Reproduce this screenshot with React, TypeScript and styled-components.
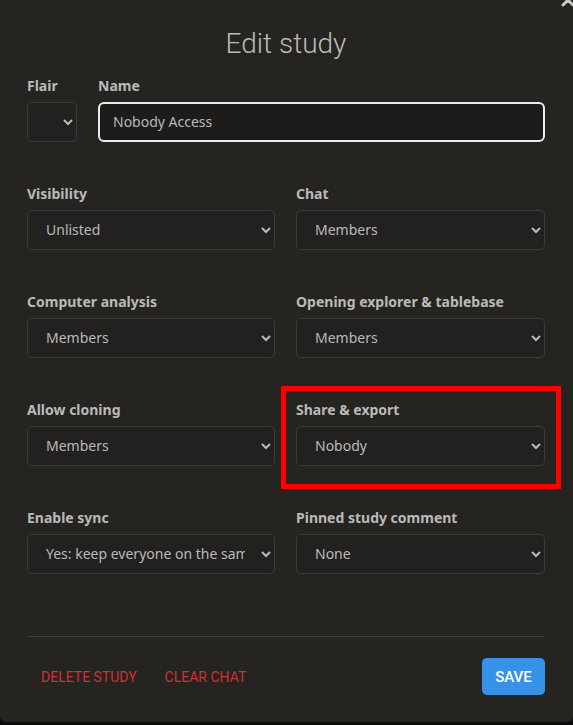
import React from "react";
import styled, { createGlobalStyle } from "styled-components";

const Global = createGlobalStyle`
  html, body { margin: 0; padding: 0; background: #0d0c0b; }
  body { font-family: "Noto Sans", "Liberation Sans", sans-serif; color-scheme: dark; }
  * { box-sizing: border-box; }
`;

const Dialog = styled.div`
  position: relative;
  width: 573px;
  height: 722px;
  background: #262421;
  border-radius: 0 0 6px 6px;
  padding: 27px 28px 27px 27px;
  display: flex;
  flex-direction: column;
`;

const Close = styled.button`
  position: absolute;
  top: -9px;
  right: -4px;
  width: 18px;
  height: 18px;
  padding: 0;
  border: none;
  background: none;
  color: #c8c8c8;
  display: flex;
  align-items: center;
  justify-content: center;
`;

const Title = styled.h2`
  margin: 0 0 15px;
  font-family: Roboto, "Liberation Sans", sans-serif;
  font-weight: 300;
  font-size: 28px;
  line-height: 34px;
  text-align: center;
  color: #bababa;
`;

const Rows = styled.div`
  display: flex;
  flex-direction: column;
  gap: 42px;
`;

const Row = styled.div<{ $cols: string }>`
  display: grid;
  grid-template-columns: ${(p) => p.$cols};
  column-gap: 21px;
`;

const Field = styled.div<{ $highlight?: boolean }>`
  position: relative;
  display: flex;
  flex-direction: column;
  gap: 6px;
  min-width: 0;
  ${(p) =>
    p.$highlight &&
    `
    &::after {
      content: "";
      position: absolute;
      left: -15px;
      right: -16px;
      top: -14px;
      bottom: -23px;
      border: 5px solid #ff0000;
      pointer-events: none;
    }
  `}
`;

const Label = styled.label`
  font-weight: 700;
  font-size: 14px;
  line-height: 20px;
  color: #bababa;
`;

const Select = styled.select`
  height: 40px;
  width: 100%;
  min-width: 0;
  padding: 0 13px 2px 14px;
  font-family: "Noto Sans", "Liberation Sans", sans-serif;
  font-size: 14px;
  line-height: 18px;
  color: #bababa;
  background: #22211f;
  border: 1px solid #3c3b39;
  border-radius: 5px;
  color-scheme: dark;
  outline: none;
`;

const NameInput = styled.input`
  height: 40px;
  width: 100%;
  padding: 0 13px 1px;
  font-family: "Noto Sans", "Liberation Sans", sans-serif;
  font-size: 14px;
  color: #bababa;
  background: #1d1c1a;
  border: 2px solid #ececec;
  border-radius: 6px;
  outline: none;
`;

const Divider = styled.hr`
  margin: 62px 0 0;
  border: none;
  border-top: 1px solid #3e3d3b;
`;

const Footer = styled.div`
  margin-top: 21px;
  display: flex;
  align-items: center;
`;

const DangerButton = styled.button`
  background: none;
  border: none;
  padding: 0 14px;
  font-family: Roboto, "Liberation Sans", sans-serif;
  font-size: 14px;
  font-weight: 400;
  text-transform: uppercase;
  color: #cc3333;
  height: 37px;
`;

const Spacer = styled.div`
  flex: 1;
`;

const SaveButton = styled.button`
  height: 37px;
  width: 63px;
  border: none;
  border-radius: 5px;
  background: #3692e7;
  color: #ffffff;
  font-family: Roboto, "Liberation Sans", sans-serif;
  font-size: 15px;
  font-weight: 500;
  text-transform: uppercase;
`;

type Opt = { label: string; value: string; options: string[]; highlight?: boolean };

const grid: Opt[][] = [
  [
    { label: "Visibility", value: "Unlisted", options: ["Public", "Unlisted", "Invite only"] },
    { label: "Chat", value: "Members", options: ["Nobody", "Members", "Everyone"] },
  ],
  [
    { label: "Computer analysis", value: "Members", options: ["Nobody", "Members", "Everyone"] },
    { label: "Opening explorer & tablebase", value: "Members", options: ["Nobody", "Members", "Everyone"] },
  ],
  [
    { label: "Allow cloning", value: "Members", options: ["Nobody", "Members", "Everyone"] },
    { label: "Share & export", value: "Nobody", options: ["Nobody", "Members", "Everyone"], highlight: true },
  ],
  [
    {
      label: "Enable sync",
      value: "Yes: keep everyone on the same position",
      options: ["Yes: keep everyone on the same position", "No: let people browse freely"],
    },
    { label: "Pinned study comment", value: "None", options: ["None", "Right under the board"] },
  ],
];

export default function App() {
  return (
    <>
      <Global />
      <Dialog>
        <Close aria-label="Close">
          <svg width="14" height="14" viewBox="0 0 14 14">
            <path d="M2 2 L12 12 M12 2 L2 12" stroke="currentColor" strokeWidth="3" strokeLinecap="round" />
          </svg>
        </Close>
        <Title>Edit study</Title>
        <Rows>
          <Row $cols="50px 1fr">
            <Field>
              <Label>Flair</Label>
              <Select defaultValue="">
                <option value=""></option>
              </Select>
            </Field>
            <Field>
              <Label>Name</Label>
              <NameInput defaultValue="Nobody Access" />
            </Field>
          </Row>
          {grid.map((row, i) => (
            <Row key={i} $cols="248px 249px">
              {row.map((f) => (
                <Field key={f.label} $highlight={f.highlight}>
                  <Label>{f.label}</Label>
                  <Select defaultValue={f.value}>
                    {f.options.map((o) => (
                      <option key={o} value={o}>
                        {o}
                      </option>
                    ))}
                  </Select>
                </Field>
              ))}
            </Row>
          ))}
        </Rows>
        <Divider />
        <Footer>
          <DangerButton>Delete study</DangerButton>
          <DangerButton>Clear chat</DangerButton>
          <Spacer />
          <SaveButton>Save</SaveButton>
        </Footer>
      </Dialog>
    </>
  );
}
